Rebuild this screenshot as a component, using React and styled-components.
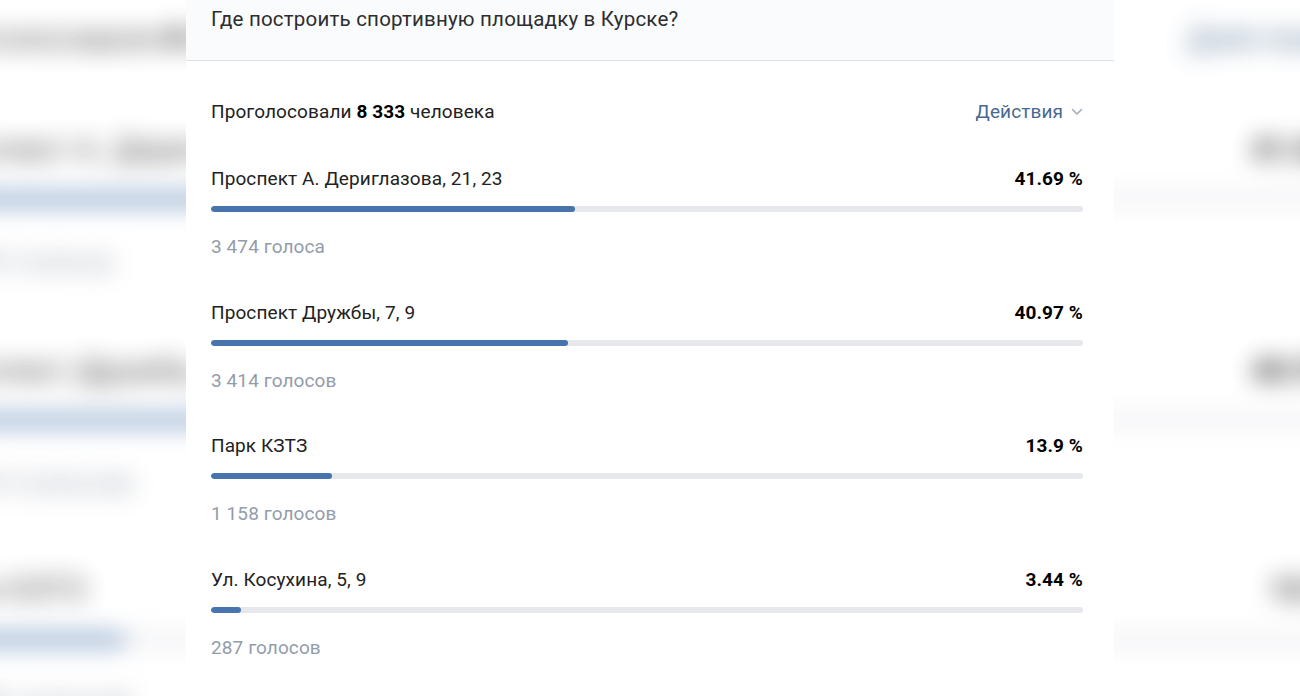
import React from 'react'
import styled, { createGlobalStyle } from 'styled-components'

const GlobalStyle = createGlobalStyle`
    html, body {
        margin: 0;
        background: #fff;
        overflow: hidden;
    }
    body {
        font-family: Roboto, "Open Sans", "Liberation Sans", sans-serif;
        -webkit-font-smoothing: antialiased;
    }
`

const poll = {
    question: 'Где построить спортивную площадку в Курске?',
    total: '8 333',
    options: [
        { title: 'Проспект А. Дериглазова, 21, 23', percent: 41.69, votes: '3 474 голоса' },
        { title: 'Проспект Дружбы, 7, 9', percent: 40.97, votes: '3 414 голосов' },
        { title: 'Парк КЗТЗ', percent: 13.9, votes: '1 158 голосов' },
        { title: 'Ул. Косухина, 5, 9', percent: 3.44, votes: '287 голосов' },
    ],
}

const Stage = styled.main`
    display: grid;
    width: 1300px;
    height: 696px;
    overflow: hidden;
`

// the same card, enlarged and out of focus, sits behind the sharp one
const Backdrop = styled.div`
    grid-area: 1 / 1;
    justify-self: center;
    width: 928px;
    height: 696px;
    transform-origin: 50% 224px;
    transform: scale(1.65);
    filter: blur(7.5px);
    opacity: 0.85;
    pointer-events: none;
`

const Card = styled.section`
    grid-area: 1 / 1;
    justify-self: center;
    position: relative;
    z-index: 1;
    width: 928px;
    height: 696px;
    background: #fff;
`

const Header = styled.header`
    box-sizing: border-box;
    height: 61px;
    padding: 6px 25px 0;
    background: #fafbfc;
    border-bottom: 1px solid #dce1e6;
    font-size: 20.5px;
    letter-spacing: 0.2px;
    line-height: 26px;
    color: #2c2d2e;
`

const Body = styled.div`
    padding: 39px 31px 0 25px;
`

const Line = styled.div`
    display: flex;
    justify-content: space-between;
    align-items: center;
    height: 24px;
    font-size: 19px;
    letter-spacing: 0.1px;
    line-height: 24px;
    color: #222;
`

const Strong = styled.b`
    font-weight: 700;
    color: #000;
`

const Actions = styled.button`
    display: flex;
    align-items: center;
    gap: 8px;
    padding: 0;
    border: 0;
    background: none;
    font: inherit;
    letter-spacing: inherit;
    color: #47698f;
    cursor: pointer;
`

const Options = styled.div`
    display: flex;
    flex-direction: column;
    gap: 41.5px;
    margin-top: 43px;
`

const Option = styled.div`
    display: flex;
    flex-direction: column;
`

const Percent = styled.span`
    font-weight: 700;
    color: #000;
`

const Track = styled.div`
    height: 6px;
    margin-top: 15px;
    border-radius: 3px;
    background: #e7e8ec;
    overflow: hidden;
`

const Fill = styled.div`
    height: 100%;
    border-radius: 3px;
    background: #4774ad;
`

const Votes = styled.div`
    margin-top: 23px;
    font-size: 19px;
    letter-spacing: 0.1px;
    line-height: 24px;
    color: #939cab;
`

const Chevron = () => (
    <svg width="12" height="8" viewBox="0 0 12 8" fill="none">
        <path d="M1.5 1.5L6 6l4.5-4.5" stroke="#a3adb8" strokeWidth="1.6" strokeLinecap="round" strokeLinejoin="round" />
    </svg>
)

function PollCard() {
    return (
        <>
            <Header>{poll.question}</Header>
            <Body>
                <Line>
                    <span>
                        Проголосовали <Strong>{poll.total}</Strong> человека
                    </span>
                    <Actions>
                        Действия
                        <Chevron />
                    </Actions>
                </Line>
                <Options>
                    {poll.options.map((o) => (
                        <Option key={o.title}>
                            <Line>
                                <span>{o.title}</span>
                                <Percent>{o.percent} %</Percent>
                            </Line>
                            <Track>
                                <Fill style={{ width: `${o.percent}%` }} />
                            </Track>
                            <Votes>{o.votes}</Votes>
                        </Option>
                    ))}
                </Options>
            </Body>
        </>
    )
}

export default function App() {
    return (
        <Stage>
            <GlobalStyle />
            <Backdrop aria-hidden="true">
                <PollCard />
            </Backdrop>
            <Card>
                <PollCard />
            </Card>
        </Stage>
    )
}
